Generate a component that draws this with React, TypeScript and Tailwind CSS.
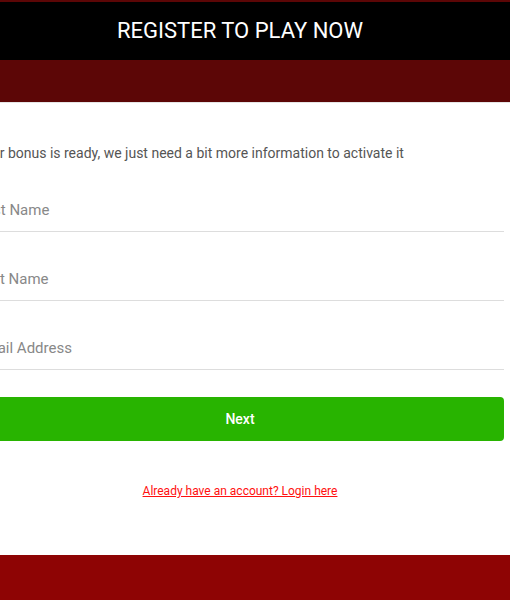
import React from "react";

export default function App() {
  const font = { fontFamily: "Roboto, 'Liberation Sans', sans-serif" };
  return (
    <div className="w-full h-[600px] overflow-hidden bg-white flex flex-col" style={font}>
      <div className="h-[2px] bg-[#5c0606] shrink-0" />
      <div className="h-[58px] bg-black shrink-0 flex">
        <div className="ml-[-24px] w-[528px] shrink-0 flex items-center justify-center">
          <h1 className="text-white text-[22px] leading-none font-normal">REGISTER TO PLAY NOW</h1>
        </div>
      </div>
      <div className="h-[43px] bg-[#5c0606] shrink-0 border-b border-[#e5e5e5]" />
      <div className="h-[452px] shrink-0 flex">
        <div className="ml-[-24px] w-[528px] shrink-0 flex flex-col pt-[40px]">
          <p className="text-[14px] leading-[20px] text-[#555555] whitespace-nowrap">
            Your bonus is ready, we just need a bit more information to activate it
          </p>
          <div className="flex flex-col gap-[29px] mt-[29px]">
            <input
              className="h-[40px] pb-[3px] border-b border-[#dddddd] text-[15px] outline-none placeholder:text-[#888888]"
              placeholder="First Name"
            />
            <input
              className="h-[40px] pb-[3px] border-b border-[#dddddd] text-[15px] outline-none placeholder:text-[#888888]"
              placeholder="Last Name"
            />
            <input
              className="h-[40px] pb-[3px] border-b border-[#dddddd] text-[15px] outline-none placeholder:text-[#888888]"
              placeholder="Email Address"
            />
          </div>
          <button className="mt-[27px] h-[44px] rounded-[4px] bg-[#28b400] text-white text-[14px] font-medium">
            Next
          </button>
          <div className="mt-[42px] flex justify-center">
            <a href="#" className="text-[12px] leading-[16px] text-[#ff1010] underline">
              Already have an account? Login here
            </a>
          </div>
        </div>
      </div>
      <div className="flex-1 bg-[#8e0404]" />
    </div>
  );
}
